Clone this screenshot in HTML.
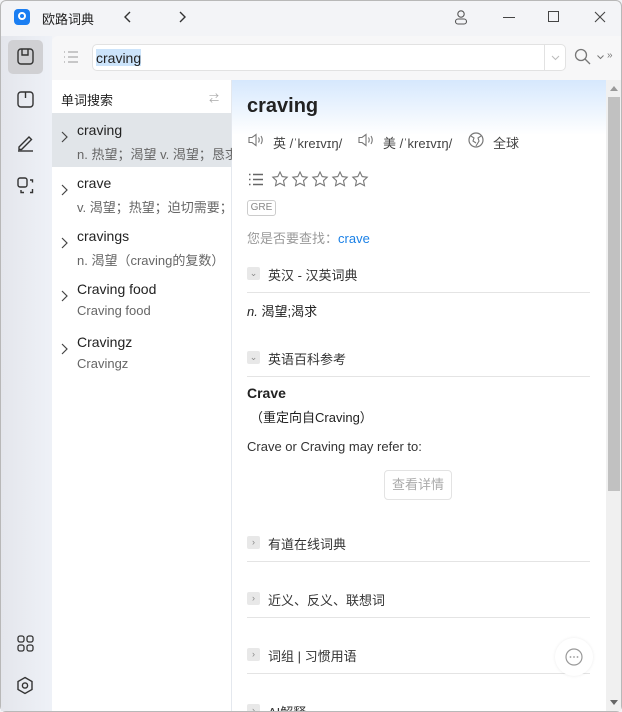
<!DOCTYPE html>
<html style="width:622px;height:712px;overflow:hidden"><head><meta charset="utf-8"><style>
*{margin:0;padding:0;box-sizing:border-box}
body{width:622px;height:712px;overflow:hidden;background:#f3f4f7;font-family:"Liberation Sans","Noto Sans CJK SC",sans-serif;position:relative;color:#222}
.a{position:absolute}
svg{position:absolute;overflow:visible}
.t{font-size:13px;white-space:nowrap}
.sec{position:absolute;left:247px;width:343px;height:28px;border-bottom:1px solid #e4e4e4;font-size:13px;color:#333}
.sec .b{position:absolute;left:0;top:2px;width:13px;height:13px;background:#e8e8e8;border-radius:2px;color:#888;font-size:9px;text-align:center;line-height:13px}
.sec span{position:absolute;left:21px;top:0}
.li{position:absolute;left:52px;width:180px;height:53px}
.li .w{position:absolute;left:25px;top:9px;font-size:14px;color:#222;white-space:nowrap}
.li .s{position:absolute;left:25px;top:31px;font-size:13px;color:#666;white-space:nowrap;overflow:hidden;width:155px}
.li .c{position:absolute;left:9px;top:18px}
</style></head><body>
<div class="a" style="left:0;top:0;width:622px;height:712px;border:1px solid #b8b8b8;border-radius:6px"></div>
<div class="a" style="left:14px;top:9px;width:16px;height:16px;background:#1a7ef2;border-radius:4px"></div>
<div class="a" style="left:18px;top:12px;width:8px;height:8px;border:2px solid #fff;border-radius:50%"></div>
<div class="a t" style="left:42px;top:9px;font-size:13px;color:#222">欧路词典</div>
<svg style="left:123px;top:11px" width="10" height="12"><path d="M7 1 L2 6 L7 11" fill="none" stroke="#333" stroke-width="1.4"/></svg>
<svg style="left:178px;top:11px" width="10" height="12"><path d="M2 1 L7 6 L2 11" fill="none" stroke="#333" stroke-width="1.4"/></svg>
<svg style="left:454px;top:9px" width="14" height="16"><circle cx="7" cy="5" r="3.2" fill="none" stroke="#555" stroke-width="1.1"/><rect x="1.5" y="10" width="11" height="5" rx="2.5" fill="none" stroke="#555" stroke-width="1.1"/></svg>
<div class="a" style="left:503px;top:17px;width:12px;height:1px;background:#444"></div>
<div class="a" style="left:548px;top:11px;width:11px;height:11px;border:1px solid #444"></div>
<svg style="left:594px;top:11px" width="12" height="12"><path d="M1 1L11 11M11 1L1 11" stroke="#444" stroke-width="1.1"/></svg>
<div class="a" style="left:1px;top:36px;width:51px;height:675px;background:linear-gradient(90deg,#e4e6ec,#eef1f7)"></div>
<div class="a" style="left:8px;top:40px;width:35px;height:34px;background:#d0d0d3;border-radius:5px"></div>
<svg style="left:17px;top:48px" width="18" height="18"><rect x="1" y="1" width="15" height="15" rx="3" fill="none" stroke="#333" stroke-width="1.4"/><path d="M5 1V7H11V1" fill="none" stroke="#333" stroke-width="1.4"/></svg>
<svg style="left:17px;top:91px" width="18" height="18"><rect x="1" y="1" width="15" height="15" rx="3" fill="none" stroke="#333" stroke-width="1.4"/><path d="M8.5 1V7" stroke="#333" stroke-width="1.4"/></svg>
<svg style="left:17px;top:134px" width="18" height="18"><path d="M2 13L12 3l2.5 2.5L4.5 15.5H2z" fill="none" stroke="#333" stroke-width="1.4"/><path d="M1 17H16" stroke="#333" stroke-width="1.4"/></svg>
<svg style="left:17px;top:177px" width="18" height="18"><rect x="1" y="1" width="9" height="9" rx="2" fill="none" stroke="#333" stroke-width="1.4"/><path d="M13 3h2.5v2.5M15.5 12v3.5H13M4 13v2.5h3" fill="none" stroke="#333" stroke-width="1.4"/></svg>
<svg style="left:17px;top:635px" width="18" height="18"><rect x="1" y="1" width="6" height="6" rx="2" fill="none" stroke="#333" stroke-width="1.3"/><rect x="10" y="1" width="6" height="6" rx="2" fill="none" stroke="#333" stroke-width="1.3"/><rect x="1" y="10" width="6" height="6" rx="2" fill="none" stroke="#333" stroke-width="1.3"/><rect x="10" y="10" width="6" height="6" rx="2" fill="none" stroke="#333" stroke-width="1.3"/></svg>
<svg style="left:16px;top:676px" width="18" height="20"><path d="M9 1.5L16 5.5V13.5L9 17.5L2 13.5V5.5Z" fill="none" stroke="#333" stroke-width="1.4"/><circle cx="9" cy="9.5" r="2.6" fill="none" stroke="#333" stroke-width="1.4"/></svg>
<div class="a" style="left:52px;top:36px;width:569px;height:44px;background:#f7f7f8;border-top-left-radius:6px"></div>
<svg style="left:63px;top:51px" width="16" height="13"><path d="M1 1h1M1 6h1M1 11h1M5 1h10M5 6h10M5 11h10" stroke="#aaa" stroke-width="1.3"/></svg>
<div class="a" style="left:92px;top:44px;width:474px;height:27px;background:#fff;border:1px solid #e2e2e2;border-radius:5px"></div>
<div class="a" style="left:544px;top:45px;width:1px;height:25px;background:#e2e2e2"></div>
<svg style="left:551px;top:55px" width="9" height="6"><path d="M1 1l3.5 3.5L8 1" fill="none" stroke="#bbb" stroke-width="1"/></svg>
<div class="a" style="left:96px;top:49px;width:45px;height:17px;background:#cce4fb"></div>
<div class="a t" style="left:96px;top:50px;font-size:14px">craving</div>
<svg style="left:574px;top:48px" width="18" height="18"><circle cx="7" cy="7" r="5.5" fill="none" stroke="#777" stroke-width="1.3"/><path d="M11 11l5 5" stroke="#777" stroke-width="1.3"/></svg>
<svg style="left:597px;top:55px" width="7" height="5"><path d="M.5 .5l3 3 3-3" fill="none" stroke="#777" stroke-width="1"/></svg>
<div class="a" style="left:607px;top:50px;font-size:10px;color:#777">»</div>
<div class="a" style="left:52px;top:80px;width:180px;height:631px;background:#fff;border-right:1px solid #e4e8ee"></div>
<div class="a t" style="left:61px;top:90px;font-size:13px">单词搜索</div>
<div class="a" style="left:209px;top:90px;font-size:10px;color:#aaa">⇄</div>
<div class="a" style="left:52px;top:113px;width:179px;height:54px;background:#e1e5e9"></div>
<div class="li" style="top:113px"><svg class="c" width="7" height="12"><path d="M1 1l5 5-5 5" fill="none" stroke="#444" stroke-width="1.2"/></svg><div class="w">craving</div><div class="s">n. 热望；渴望 v. 渴望；恳求</div></div>
<div class="li" style="top:166px"><svg class="c" width="7" height="12"><path d="M1 1l5 5-5 5" fill="none" stroke="#444" stroke-width="1.2"/></svg><div class="w">crave</div><div class="s">v. 渴望；热望；迫切需要；</div></div>
<div class="li" style="top:219px"><svg class="c" width="7" height="12"><path d="M1 1l5 5-5 5" fill="none" stroke="#444" stroke-width="1.2"/></svg><div class="w">cravings</div><div class="s">n. 渴望（craving的复数）</div></div>
<div class="li" style="top:272px"><svg class="c" width="7" height="12"><path d="M1 1l5 5-5 5" fill="none" stroke="#444" stroke-width="1.2"/></svg><div class="w">Craving food</div><div class="s">Craving food</div></div>
<div class="li" style="top:325px"><svg class="c" width="7" height="12"><path d="M1 1l5 5-5 5" fill="none" stroke="#444" stroke-width="1.2"/></svg><div class="w">Cravingz</div><div class="s">Cravingz</div></div>
<div class="a" style="left:232px;top:80px;width:374px;height:631px;background:#fff;overflow:hidden">
<div class="a" style="left:0;top:0;width:374px;height:55px;background:linear-gradient(#d6e8fd,#fff)"></div>
<div class="sec" style="top:622px;left:15px;border:none"><div class="b">›</div><span>AI解释</span></div>
</div>
<div class="a" style="left:247px;top:95px;font-size:20px;font-weight:bold;color:#222">craving</div>
<svg style="left:248px;top:133px" width="16" height="14"><path d="M1 4.5h3l4-3v11l-4-3H1z" fill="none" stroke="#777" stroke-width="1.1"/><path d="M10.5 4.5q1.5 2.5 0 5M13 3q2.5 4 0 8" fill="none" stroke="#777" stroke-width="1.1"/></svg>
<div class="a t" style="left:273px;top:133px;color:#444">英 /ˈkreɪvɪŋ/</div>
<svg style="left:358px;top:133px" width="16" height="14"><path d="M1 4.5h3l4-3v11l-4-3H1z" fill="none" stroke="#777" stroke-width="1.1"/><path d="M10.5 4.5q1.5 2.5 0 5M13 3q2.5 4 0 8" fill="none" stroke="#777" stroke-width="1.1"/></svg>
<div class="a t" style="left:383px;top:133px;color:#444">美 /ˈkreɪvɪŋ/</div>
<svg style="left:468px;top:132px" width="16" height="16"><circle cx="8" cy="8" r="7" fill="none" stroke="#777" stroke-width="1.2"/><path d="M3 4l3 2-1 3 3 2M13 4l-3 2 1 3-3 5" fill="none" stroke="#777" stroke-width="1.1"/></svg>
<div class="a t" style="left:493px;top:133px;color:#444">全球</div>
<svg style="left:248px;top:173px" width="16" height="14"><path d="M1 1.5h1.5M1 6.5h1.5M1 11.5h1.5M5 1.5h10M5 6.5h10M5 11.5h10" stroke="#666" stroke-width="1.4"/></svg>
<svg style="left:272px;top:171px" width="100" height="18"><g fill="none" stroke="#777" stroke-width="1.1"><path id="s" d="M8 1l2.2 4.6 5 .6-3.7 3.5 1 5L8 12.3 3.5 14.7l1-5L.8 6.2l5-.6z"/><use href="#s" x="20"/><use href="#s" x="40"/><use href="#s" x="60"/><use href="#s" x="80"/></g></svg>
<div class="a" style="left:247px;top:200px;width:29px;height:16px;border:1px solid #ccc;border-radius:3px;font-size:10px;color:#888;text-align:center;line-height:14px">GRE</div>
<div class="a t" style="left:247px;top:228px;color:#999">您是否要查找：<span style="color:#1a80e6">crave</span></div>
<div class="sec" style="top:265px"><div class="b">⌄</div><span>英汉 - 汉英词典</span></div>
<div class="a t" style="left:247px;top:301px;color:#222"><i>n.</i> 渴望;渴求</div>
<div class="sec" style="top:349px"><div class="b">⌄</div><span>英语百科参考</span></div>
<div class="a" style="left:247px;top:385px;font-size:14px;font-weight:bold">Crave</div>
<div class="a t" style="left:250px;top:407px;color:#222">（重定向自Craving）</div>
<div class="a t" style="left:247px;top:439px;color:#333">Crave or Craving may refer to:</div>
<div class="a" style="left:384px;top:470px;width:68px;height:30px;border:1px solid #e3e3e3;border-radius:4px;font-size:13px;color:#aaa;text-align:center;line-height:28px">查看详情</div>
<div class="sec" style="top:534px"><div class="b">›</div><span>有道在线词典</span></div>
<div class="sec" style="top:590px"><div class="b">›</div><span>近义、反义、联想词</span></div>
<div class="sec" style="top:646px"><div class="b">›</div><span>词组 | 习惯用语</span></div>
<div class="a" style="left:555px;top:638px;width:38px;height:38px;border-radius:50%;background:#fff;box-shadow:0 0 3px rgba(0,0,0,.08)"></div>
<svg style="left:565px;top:648px" width="18" height="18"><circle cx="9" cy="9" r="8" fill="none" stroke="#999" stroke-width="1.2"/><circle cx="5.5" cy="9" r=".9" fill="#999"/><circle cx="9" cy="9" r=".9" fill="#999"/><circle cx="12.5" cy="9" r=".9" fill="#999"/></svg>
<div class="a" style="left:606px;top:80px;width:15px;height:631px;background:#f0f0f0"></div>
<div class="a" style="left:608px;top:97px;width:12px;height:394px;background:#c1c1c1"></div>
<svg style="left:610px;top:86px" width="8" height="5"><path d="M0 5L4 0L8 5z" fill="#999"/></svg>
<svg style="left:610px;top:700px" width="8" height="5"><path d="M0 0L4 5L8 0z" fill="#666"/></svg>
</body></html>
